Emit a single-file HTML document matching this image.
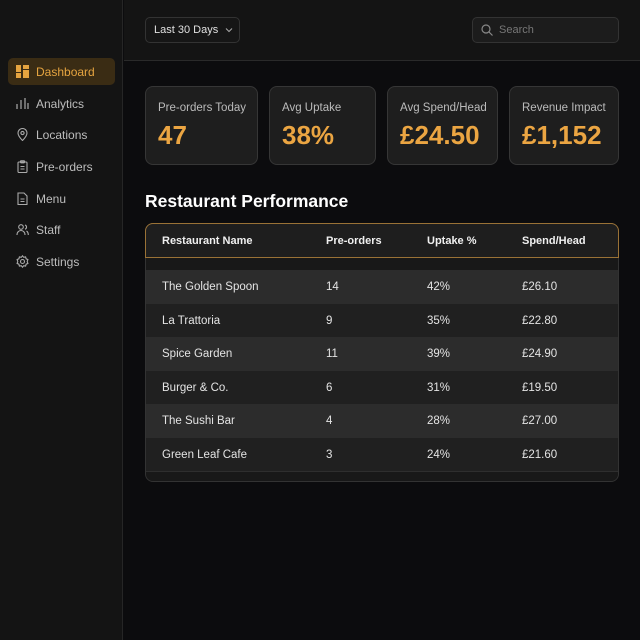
<!DOCTYPE html>
<html><head><style>
*{box-sizing:border-box;margin:0;padding:0}
body{width:640px;height:640px;background:#0c0c0e;font-family:"Liberation Sans",sans-serif;position:relative;overflow:hidden;color:#ddd}
.side{position:absolute;left:0;top:0;width:123px;height:640px;background:#141414;border-right:1px solid #262626}
.nav{position:absolute;left:8px;width:107px;height:27px;display:flex;align-items:center;font-size:12px;color:#bdbdbd}
.nav svg{position:absolute;left:8px;width:13px;height:13px}
.nav span{position:absolute;left:28px}
.act{background:#3a2c14;border-radius:5px;color:#e5a440}
.top{position:absolute;left:124px;top:0;right:0;height:61px;background:#141414;border-bottom:1px solid #2a2a2a}
.dd{position:absolute;left:145px;top:17px;width:95px;height:26px;border:1px solid #333;border-radius:5px;background:#161616;font-size:11px;color:#e0e0e0;padding:6px 0 0 8px}
.srch{position:absolute;left:472px;top:17px;width:147px;height:26px;border:1px solid #333;border-radius:5px;background:#1c1c1c;font-size:11px;color:#777;padding:6px 0 0 26px}
.card{position:absolute;top:86px;height:79px;background:#1e1e1e;border:1px solid #363636;border-radius:8px;padding:0 0 0 12px}
.card .l{font-size:11.5px;color:#bbb;margin-top:15px}
.card .v{font-size:26px;font-weight:bold;color:#eba542;margin-top:6px}
h2{position:absolute;left:145px;top:191px;font-size:17.5px;color:#fff;font-weight:bold}
.tbl{position:absolute;left:145px;top:223px;width:474px;height:259px;border:1px solid #333;border-radius:8px;background:#1c1c1c;overflow:hidden}
.hd{position:absolute;left:0;top:0;width:472px;height:34px;background:#1e1e1e;font-size:11px;font-weight:bold;color:#f0f0f0;border-bottom:1.5px solid #9a7236}
.gold{position:absolute;left:145px;top:223px;width:474px;height:35px;border:1px solid #9a7236;border-bottom:none;border-radius:8px 8px 0 0;pointer-events:none}
.row{position:absolute;left:0;width:472px;height:34px;font-size:11.5px;color:#e4e4e4}
.hd div,.row div{position:absolute;top:11px}
.c1{left:16px}.c2{left:180px}.c3{left:281px}.c4{left:376px}
</style></head><body>
<div class="side">
<div class="nav act" style="top:58px"><svg viewBox="0 0 13 13"><rect x="0" y="0" width="5" height="7" fill="#e5a440"/><rect x="0" y="8" width="5" height="5" fill="#e5a440"/><rect x="7" y="0" width="6" height="4" fill="#e5a440"/><rect x="7" y="5" width="6" height="8" fill="#e5a440"/></svg><span>Dashboard</span></div>
<div class="nav" style="top:90px"><svg viewBox="0 0 13 13" stroke="#aaa" stroke-width="1.2"><path d="M1 12V7M5 12V3M9 12V1M12 12V6"/></svg><span>Analytics</span></div>
<div class="nav" style="top:121px"><svg viewBox="0 0 13 13" fill="none" stroke="#aaa" stroke-width="1.1"><path d="M6.5 12.5C3 9 2 7 2 5a4.5 4.5 0 0 1 9 0c0 2-1 4-4.5 7.5z"/><circle cx="6.5" cy="5" r="1.6"/></svg><span>Locations</span></div>
<div class="nav" style="top:153px"><svg viewBox="0 0 13 13" fill="none" stroke="#aaa" stroke-width="1.1"><rect x="2" y="2" width="9" height="10.5" rx="1"/><rect x="4.5" y="0.8" width="4" height="2" rx=".5"/><path d="M4.5 6.5h4M4.5 9h4"/></svg><span>Pre-orders</span></div>
<div class="nav" style="top:185px"><svg viewBox="0 0 13 13" fill="none" stroke="#aaa" stroke-width="1.1"><path d="M2 1h6l3 3v8.5H2z"/><path d="M4.5 7h4M4.5 9.5h4"/></svg><span>Menu</span></div>
<div class="nav" style="top:216px"><svg viewBox="0 0 13 13" fill="none" stroke="#aaa" stroke-width="1.1"><circle cx="5" cy="4" r="2.3"/><path d="M1 12c0-3 2-4.5 4-4.5s4 1.5 4 4.5M9 2a2.2 2.2 0 0 1 0 4.2M10.5 8c1 .6 1.8 2 1.8 4"/></svg><span>Staff</span></div>
<div class="nav" style="top:248px"><svg viewBox="0 0 13 13" fill="none" stroke="#aaa" stroke-width="1.1"><circle cx="6.5" cy="6.5" r="2"/><path d="M6.5 .8l1.2 1.5 1.9-.4.5 1.9 1.8.8-.7 1.9.7 1.9-1.8.8-.5 1.9-1.9-.4-1.2 1.5-1.2-1.5-1.9.4-.5-1.9-1.8-.8.7-1.9-.7-1.9 1.8-.8.5-1.900 1.9.4z"/></svg><span>Settings</span></div>
</div>
<div class="top"></div>
<div class="dd">Last 30 Days <svg width="8" height="6" viewBox="0 0 8 6" style="margin-left:4px"><path d="M1 1.5l3 3 3-3" stroke="#aaa" fill="none"/></svg></div>
<div class="srch"><svg width="12" height="12" viewBox="0 0 12 12" style="position:absolute;left:8px;top:6px" fill="none" stroke="#888" stroke-width="1.2"><circle cx="5" cy="5" r="4"/><path d="M8 8l3.5 3.5"/></svg>Search</div>
<div class="card" style="left:145px;width:113px"><div class="l">Pre-orders Today</div><div class="v">47</div></div>
<div class="card" style="left:269px;width:107px"><div class="l">Avg Uptake</div><div class="v">38%</div></div>
<div class="card" style="left:387px;width:111px"><div class="l">Avg Spend/Head</div><div class="v">£24.50</div></div>
<div class="card" style="left:509px;width:110px"><div class="l">Revenue Impact</div><div class="v">£1,152</div></div>
<h2>Restaurant Performance</h2>
<div class="tbl">
<div class="hd"><div class="c1">Restaurant Name</div><div class="c2">Pre-orders</div><div class="c3">Uptake %</div><div class="c4">Spend/Head</div></div>
<div class="row" style="top:34px;height:12px;background:#181818"></div>
<div class="row" style="top:46px;background:#2c2c2c"><div class="c1">The Golden Spoon</div><div class="c2">14</div><div class="c3">42%</div><div class="c4">£26.10</div></div>
<div class="row" style="top:80px;background:#202020"><div class="c1">La Trattoria</div><div class="c2">9</div><div class="c3">35%</div><div class="c4">£22.80</div></div>
<div class="row" style="top:113px;background:#2c2c2c"><div class="c1">Spice Garden</div><div class="c2">11</div><div class="c3">39%</div><div class="c4">£24.90</div></div>
<div class="row" style="top:147px;background:#202020"><div class="c1">Burger &amp; Co.</div><div class="c2">6</div><div class="c3">31%</div><div class="c4">£19.50</div></div>
<div class="row" style="top:180px;background:#2c2c2c"><div class="c1">The Sushi Bar</div><div class="c2">4</div><div class="c3">28%</div><div class="c4">£27.00</div></div>
<div class="row" style="top:214px;background:#202020"><div class="c1">Green Leaf Cafe</div><div class="c2">3</div><div class="c3">24%</div><div class="c4">£21.60</div></div>
<div class="row" style="top:247px;height:12px;background:#181818;border-top:1px solid #2e2e2e"></div>
</div>
<div class="gold"></div>
</body></html>
